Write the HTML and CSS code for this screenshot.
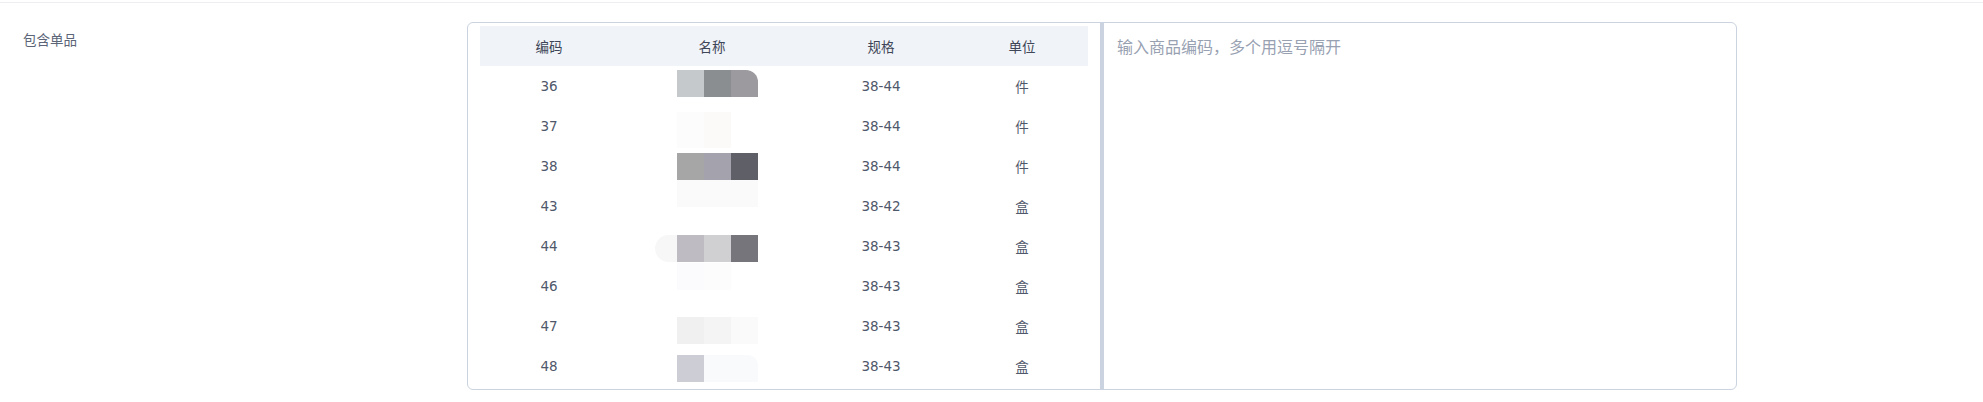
FILE: index.html
```html
<!DOCTYPE html>
<html lang="zh-CN">
<head>
<meta charset="utf-8">
<title>包含单品</title>
<link rel="stylesheet" href="styles.css">
</head>
<body>
<div class="topline"></div>
<div class="form-row">
  <div class="label">包含单品</div>
  <div class="field">
    <div class="table-panel">
      <table class="items">
        <colgroup>
          <col class="c1"><col class="c2"><col class="c3"><col class="c4">
        </colgroup>
        <thead>
          <tr><th>编码</th><th>名称</th><th>规格</th><th>单位</th></tr>
        </thead>
        <tbody>
          <tr><td>36</td><td><div class="mosaic r36"><i></i><i></i><i></i></div></td><td>38-44</td><td>件</td></tr>
          <tr><td>37</td><td><div class="mosaic r37"><i></i><i></i><i></i></div></td><td>38-44</td><td>件</td></tr>
          <tr><td>38</td><td><div class="mosaic r38"><i></i><i></i><i></i></div></td><td>38-44</td><td>件</td></tr>
          <tr><td>43</td><td><div class="mosaic r43"><i></i><i></i><i></i></div></td><td>38-42</td><td>盒</td></tr>
          <tr><td>44</td><td><div class="mosaic r44"><b></b><i></i><i></i><i></i></div></td><td>38-43</td><td>盒</td></tr>
          <tr><td>46</td><td><div class="mosaic r46"><i></i><i></i><i></i></div></td><td>38-43</td><td>盒</td></tr>
          <tr><td>47</td><td><div class="mosaic r47"><i></i><i></i><i></i></div></td><td>38-43</td><td>盒</td></tr>
          <tr><td>48</td><td><div class="mosaic r48"><i></i><i></i><i></i></div></td><td>38-43</td><td>盒</td></tr>
        </tbody>
      </table>
    </div>
    <div class="divider"></div>
    <div class="input-panel">
      <div class="placeholder">输入商品编码，多个用逗号隔开</div>
    </div>
  </div>
</div>
</body>
</html>
```
FILE: styles.css
```css
html, body {
  margin: 0;
  padding: 0;
  background: #ffffff;
  font-family: "Noto Sans CJK SC", "Noto Sans", sans-serif;
}
.topline {
  height: 2px;
  border-bottom: 1px solid #eceef4;
}
.form-row {
  display: flex;
  padding-top: 19px;
  padding-left: 23px;
}
.label {
  width: 444px;
  font-size: 13.5px;
  line-height: 34px;
  color: #5b6577;
}
.field {
  width: 1268px;
  height: 366px;
  border: 1px solid #cad3df;
  border-radius: 6px;
  display: flex;
}
.table-panel {
  padding: 3px 12px;
  width: 608px;
}
.items {
  width: 608px;
  border-collapse: collapse;
  table-layout: fixed;
  font-family: "DejaVu Sans", "Noto Sans CJK SC", sans-serif;
  font-size: 13.5px;
}
.c1 { width: 138px; }
.c2 { width: 188px; }
.c3 { width: 150px; }
.c4 { width: 132px; }
.items th {
  height: 40px;
  padding: 0;
  background: #f0f3f8;
  color: #3e4657;
  font-weight: normal;
  text-align: center;
}
.items td {
  height: 40px;
  padding: 0;
  color: #4f586a;
  text-align: center;
}
.mosaic {
  display: flex;
  justify-content: center;
  margin-left: 10px;
  height: 27px;
}
.mosaic i {
  display: block;
  width: 27px;
  height: 27px;
}
.mosaic b {
  display: block;
  width: 22px;
  height: 27px;
  margin-left: -22px;
  border-radius: 14px 0 0 14px;
  background: #f7f7f7;
}
.r36 { transform: translateY(-3px); }
.r36 i:nth-child(1) { background: #c5c9cc; }
.r36 i:nth-child(2) { background: #8a8e91; }
.r36 i:nth-child(3) { background: #9c9a9f; border-top-right-radius: 12px; }
.r37 { height: 36px; transform: translateY(4px); }
.r37 i { height: 36px; }
.r37 i:nth-child(1) { background: #fdfcfd; }
.r37 i:nth-child(2) { background: #fbfaf9; }
.r37 i:nth-child(3) { background: #ffffff; }
.r38 i:nth-child(1) { background: #a6a6a7; }
.r38 i:nth-child(2) { background: #a4a3ad; }
.r38 i:nth-child(3) { background: #5f5f68; }
.r43 { transform: translateY(-13px); }
.r43 i { background: #fafafb; }
.r44 { transform: translateY(2px); }
.r44 i:nth-child(2) { background: #bebbc3; }
.r44 i:nth-child(3) { background: #d0d0d2; }
.r44 i:nth-child(4) { background: #76757b; }
.r46 { transform: translateY(-10px); }
.r46 i:nth-child(1) { background: #fbfbfd; }
.r46 i:nth-child(2) { background: #fdfcfd; }
.r46 i:nth-child(3) { background: #ffffff; }
.r47 { transform: translateY(4px); }
.r47 i:nth-child(1) { background: #f0f0f0; }
.r47 i:nth-child(2) { background: #f4f4f4; }
.r47 i:nth-child(3) { background: #fafafa; }
.r48 { transform: translateY(2px); }
.r48 i:nth-child(1) { background: #cdcdd6; }
.r48 i:nth-child(2) { background: #f9fafb; }
.r48 i:nth-child(3) { background: #f9fafb; border-top-right-radius: 10px; }
.divider {
  width: 4px;
  background: #cad3df;
}
.input-panel {
  flex: 1;
  padding: 11px 13px;
}
.placeholder {
  font-size: 16px;
  line-height: 24px;
  color: #98a1b2;
}
```
